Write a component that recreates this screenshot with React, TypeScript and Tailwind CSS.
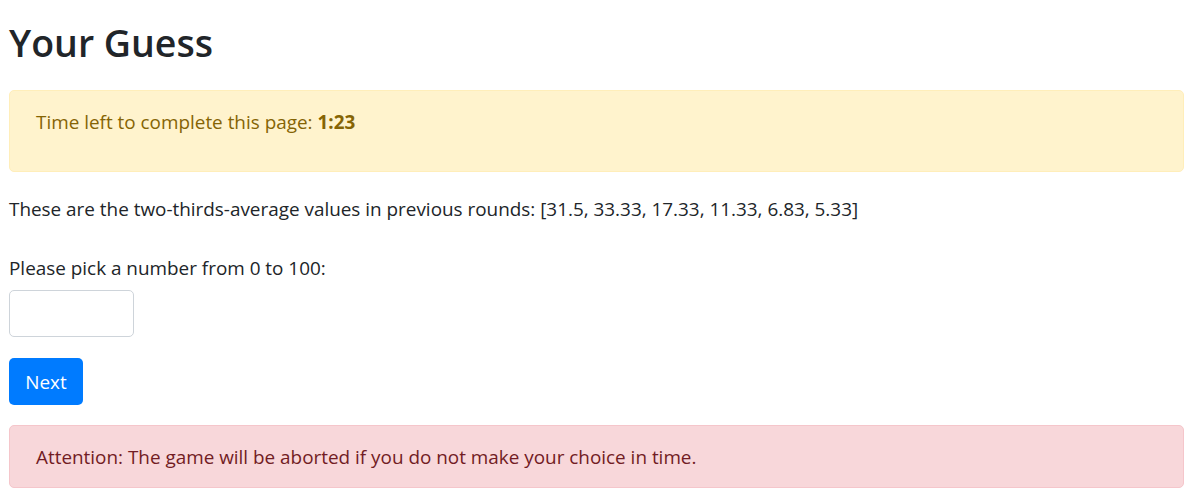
export default function App() {
  const font = { fontFamily: '"Open Sans", "Noto Sans", sans-serif' };
  return (
    <div
      className="bg-white min-h-[501px] pl-[9px] pr-[11px] pt-[16px] text-[#212529] text-[18.9px] leading-[30px]"
      style={font}
    >
      <h1 className="mt-[1px] text-[37.5px] leading-[52px] font-semibold text-[#212529]">Your Guess</h1>
      <div className="mt-[21px] rounded-[5px] border border-[#ffeeba] bg-[#fff3cd] text-[#856404] pl-[26px] pr-[25px] pt-[16px] pb-[15px]">
        <p className="mb-[19px]">
          Time left to complete this page: <b className="font-bold">1:23</b>
        </p>
      </div>
      <p className="mt-[22px]">
        These are the two-thirds-average values in previous rounds: [31.5, 33.33, 17.33, 11.33, 6.83, 5.33]
      </p>
      <label className="block mt-[29px]">Please pick a number from 0 to 100:</label>
      <input
        type="text"
        className="block mt-[7px] w-[125px] h-[47px] rounded-[5px] border border-[#ced4da] bg-white outline-none"
      />
      <button className="mt-[21px] w-[74px] h-[47px] rounded-[5px] bg-[#007bff] text-white flex items-center justify-center">
        Next
      </button>
      <div className="mt-[20px] rounded-[5px] border border-[#f5c6cb] bg-[#f8d7da] text-[#721c24] pl-[26px] pr-[25px] pt-[16px] pb-[15px]">
        Attention: The game will be aborted if you do not make your choice in time.
      </div>
    </div>
  );
}
